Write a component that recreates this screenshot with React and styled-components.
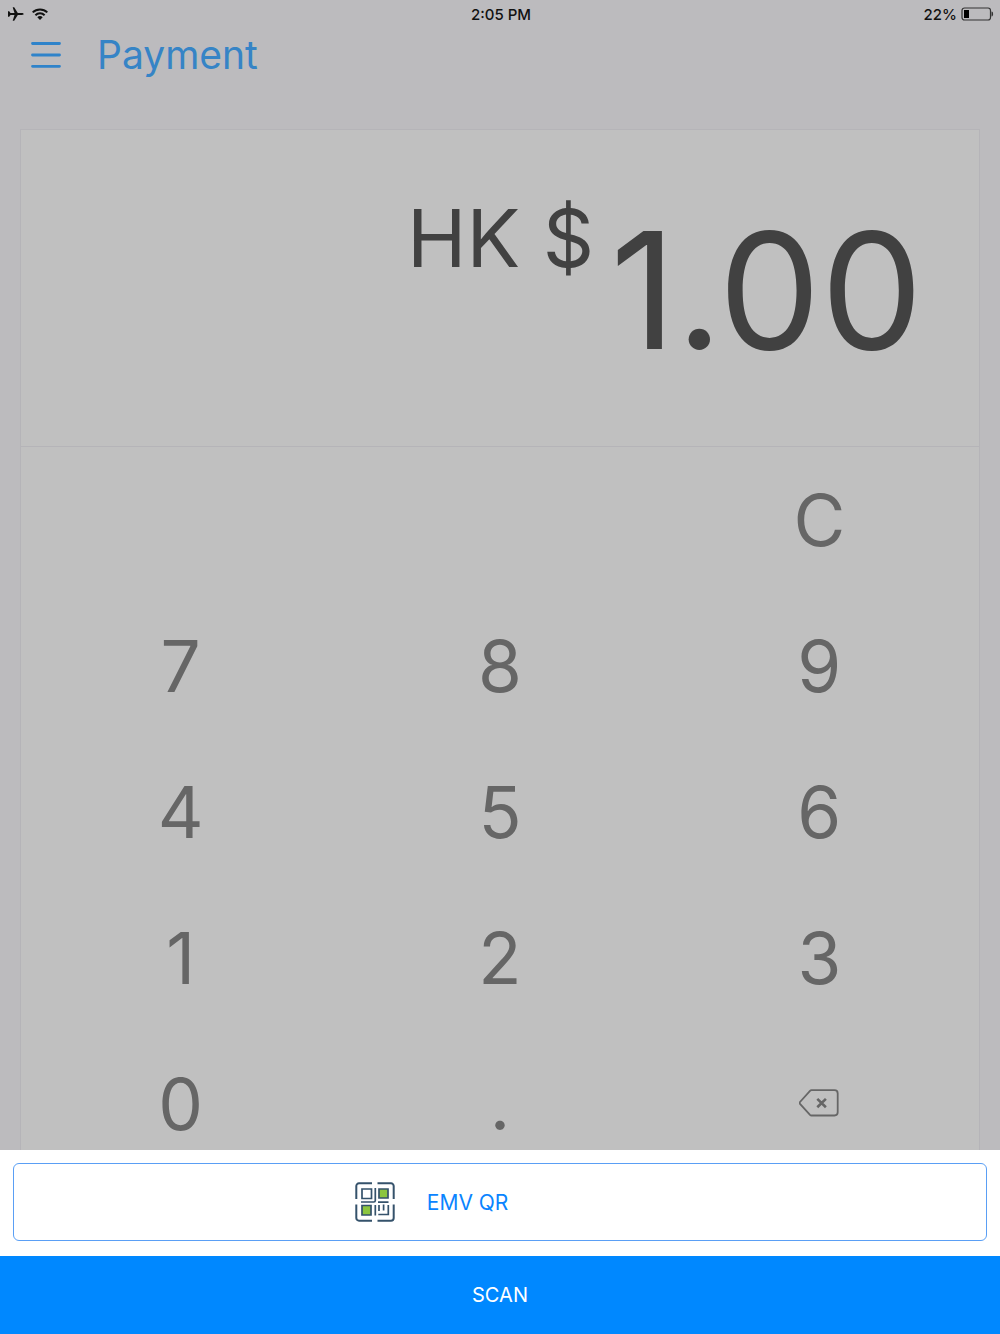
import React, { useState } from "react";
import styled, { createGlobalStyle } from "styled-components";

const keys = ["C", "7", "8", "9", "4", "5", "6", "1", "2", "3", "0", "."];

const App = () => {
  const [amount, setAmount] = useState("1.00");

  const pressKey = (key) => {
    if (key === "C") return setAmount("0");
    if (key === "." && amount.includes(".")) return;
    setAmount(amount === "0" && key !== "." ? key : amount + key);
  };

  return (
    <Page>
      <GlobalStyle />
      <StatusBar>
        <StatusGroup>
          <PlaneIcon />
          <WifiIcon />
        </StatusGroup>
        <span>2:05 PM</span>
        <StatusGroup $end>
          <span>22%</span>
          <BatteryIcon />
        </StatusGroup>
      </StatusBar>
      <Header>
        <MenuButton type="button" aria-label="Menu">
          <MenuIcon />
        </MenuButton>
        <Title>Payment</Title>
      </Header>
      <Card>
        <Display>
          <Currency>HK $</Currency>
          <Amount>{amount}</Amount>
        </Display>
        <Keypad>
          {keys.map((key) => (
            <Key
              key={key}
              type="button"
              $last={key === "C"}
              onClick={() => pressKey(key)}
            >
              {key}
            </Key>
          ))}
          <Key
            type="button"
            aria-label="Delete"
            onClick={() => setAmount(amount.slice(0, -1) || "0")}
          >
            <BackspaceIcon />
          </Key>
        </Keypad>
      </Card>
      <Sheet>
        <MethodWrap>
          <MethodButton type="button">
            <QrIcon />
            <MethodName>EMV QR</MethodName>
          </MethodButton>
        </MethodWrap>
        <ScanButton type="button">SCAN</ScanButton>
      </Sheet>
    </Page>
  );
};

const PlaneIcon = () => (
  <svg width="16" height="14" viewBox="0 0 16 14" fill="#111">
    <path d="M15.6 7c0-.6-.8-.9-1.6-.9H9.8L6.2.3H4.7L6.500 6.100H2.500L1.200 4.200H0V9.800H1.200L2.500 7.900h4L4.700 13.700h1.500L9.800 7.900H14c.8 0 1.600-.3 1.600-.9z" />
  </svg>
);

const WifiIcon = () => (
  <svg width="16" height="12" viewBox="0 0 16 12">
    <g fill="none" stroke="#111" strokeWidth="2">
      <path d="M.7 4.400a10.500 10.500 0 0 1 14.600 0" />
      <path d="M3.400 7.200a6.600 6.600 0 0 1 9.200 0" />
    </g>
    <path d="M8 12 5.300 9.300a3.900 3.900 0 0 1 5.400 0z" fill="#111" />
  </svg>
);

const BatteryIcon = () => (
  <svg width="33" height="14" viewBox="0 0 33 14">
    <rect
      x="1"
      y="1"
      width="28.500"
      height="12"
      rx="2.500"
      fill="none"
      stroke="#333"
      strokeWidth="1.200"
    />
    <rect x="3" y="3" width="5" height="8" fill="#000" />
    <path d="M30.500 4.500c1.300.3 1.600 1.200 1.600 2.500s-.3 2.200-1.600 2.500z" fill="#333" />
  </svg>
);

const MenuIcon = () => (
  <svg width="30" height="28" viewBox="0 0 30 28">
    <path
      d="M1.500 2.500h27M1.500 14h27M1.500 25.300h27"
      stroke="#2f83ca"
      strokeWidth="2.800"
      strokeLinecap="round"
    />
  </svg>
);

const BackspaceIcon = () => (
  <svg width="40" height="30" viewBox="0 0 40 30" fill="none" stroke="#666">
    <path
      d="M12.500 1.200H35.500a3.200 3.200 0 0 1 3.200 3.200V23.300a3.200 3.200 0 0 1-3.200 3.200H12.500q-.9 0-1.500-.6L1 14.800q-.8-.9 0-1.800L11 1.800q.6-.6 1.500-.6z"
      strokeWidth="1.800"
    />
    <path d="m18.300 9.900 8.600 8.400M26.900 9.900l-8.600 8.400" strokeWidth="2.600" />
  </svg>
);

const QrIcon = () => (
  <svg width="40" height="40" viewBox="0 0 40 40" fill="none">
    <g stroke="#35526b" strokeWidth="2">
      <path d="M17 1.300H4A2.700 2.700 0 0 0 1.300 4v13M22.500 1.300H36A2.700 2.700 0 0 1 38.700 4v13M1.300 22.500V36A2.700 2.700 0 0 0 4 38.700h13M38.700 22.500V36a2.700 2.700 0 0 1-2.700 2.700H22.500" />
    </g>
    <g stroke="#35526b" strokeWidth="1.700">
      <path d="M7 7h9.500v9.500H7z" />
      <path d="M24 7h9v9h-9zM7 23.500h9V33H7z" fill="#8cc63f" />
      <path d="M20.300 6v12.500q0 1.500-1.500 1.500H6M23 20.200h10.500M20.300 23v10.500M24 23v6M23.300 32.500h10V23M28.600 22.500v6" />
    </g>
  </svg>
);

const GlobalStyle = createGlobalStyle`
  * {
    box-sizing: border-box;
  }
  body {
    margin: 0;
    background: #bcbbbe;
    font-family: Inter, "Liberation Sans", sans-serif;
  }
  button {
    padding: 0;
    border: none;
    background: transparent;
    font-family: inherit;
    cursor: pointer;
  }
  svg {
    display: block;
    flex-shrink: 0;
  }
`;

const Page = styled.main`
  min-height: 100vh;
  display: flex;
  flex-direction: column;
`;

const StatusBar = styled.div`
  display: grid;
  grid-template-columns: 1fr auto 1fr;
  align-items: center;
  height: 28px;
  padding: 0 6px 0 8px;
  font-size: 15px;
  font-weight: 500;
  color: #111;
`;

const StatusGroup = styled.div`
  display: flex;
  align-items: center;
  justify-content: ${({ $end }) => ($end ? "flex-end" : "flex-start")};
  gap: ${({ $end }) => ($end ? "4px" : "8px")};
`;

const Header = styled.header`
  display: flex;
  align-items: center;
  gap: 36px;
  height: 54px;
  padding: 0 31px;
`;

const MenuButton = styled.button`
  display: flex;
`;

const Title = styled.h1`
  margin: 0;
  font-size: 39px;
  font-weight: 400;
  line-height: 48px;
  color: #3684c6;
`;

const Card = styled.section`
  flex: 1;
  margin: 47px 20px 20px;
  border: 1px solid #b5b4b8;
  background: #c0c0c0;
`;

const Display = styled.div`
  display: flex;
  justify-content: flex-end;
  align-items: flex-start;
  gap: 16px;
  height: 317px;
  padding: 60px 56px 0;
  border-bottom: 1px solid #b5b4b8;
  color: #414141;
`;

const Currency = styled.span`
  font-size: 80px;
  line-height: 96px;
`;

const Amount = styled.output`
  font-size: 162px;
  line-height: 200px;
`;

const Keypad = styled.div`
  display: grid;
  grid-template-columns: repeat(3, 1fr);
  grid-auto-rows: 146px;
`;

const Key = styled.button`
  display: flex;
  align-items: center;
  justify-content: center;
  grid-column: ${({ $last }) => ($last ? "3" : "auto")};
  font-size: 71px;
  color: #666;
`;

const Sheet = styled.footer`
  position: fixed;
  left: 0;
  right: 0;
  bottom: 0;
  background: #fff;
`;

const MethodWrap = styled.div`
  padding: 13px 13px 15px;
`;

const MethodButton = styled.button`
  display: grid;
  grid-template-columns: 2fr 3fr;
  align-items: center;
  column-gap: 32px;
  width: 100%;
  height: 78px;
  padding-left: 8px;
  border: 1px solid #5a9ff5;
  border-radius: 6px;

  svg {
    justify-self: end;
  }
`;

const MethodName = styled.span`
  font-size: 21px;
  text-align: left;
  color: #0a84ff;
`;

const ScanButton = styled.button`
  display: block;
  width: 100%;
  height: 78px;
  background: #0088ff;
  font-size: 20px;
  color: #fff;
`;

export default App;
